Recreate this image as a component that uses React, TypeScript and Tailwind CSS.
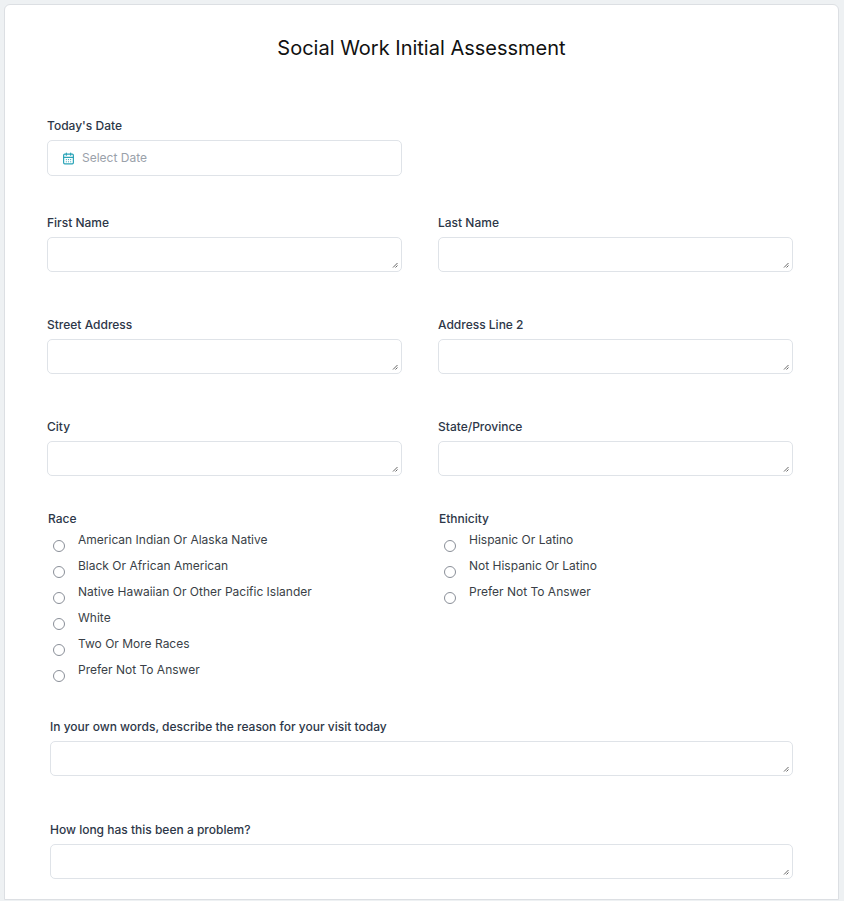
import { CalendarDays } from "lucide-react"

const race = [
  "American Indian Or Alaska Native",
  "Black Or African American",
  "Native Hawaiian Or Other Pacific Islander",
  "White",
  "Two Or More Races",
  "Prefer Not To Answer",
]
const ethnicity = ["Hispanic Or Latino", "Not Hispanic Or Latino", "Prefer Not To Answer"]

function Label({ children }: { children: string }) {
  return <div className="text-[12px] font-medium text-[#2d3748] h-[18px] leading-[18px] mb-[5px]">{children}</div>
}

function Box() {
  return (
    <div className="relative h-[35px] rounded-[5px] border border-[#dfe3e8] bg-white">
      <svg className="absolute right-[3px] bottom-[3px]" width="6" height="6" viewBox="0 0 6 6">
        <path d="M5.5 1 L1 5.5 M5.5 3.5 L3.5 5.5" stroke="#555" strokeWidth="0.9" />
      </svg>
    </div>
  )
}

function Field({ label }: { label: string }) {
  return (
    <div>
      <Label>{label}</Label>
      <Box />
    </div>
  )
}

function Radios({ label, items }: { label: string; items: string[] }) {
  return (
    <div className="pl-[1px]">
      <div className="text-[12px] font-medium text-[#2d3748] h-[18px] leading-[18px] mb-[3px]">{label}</div>
      <div className="flex flex-col">
        {items.map((t) => (
          <div key={t} className="flex items-start h-[26px] pl-[5px]">
            <span className="mt-[9px] w-[12px] h-[12px] rounded-full border border-[#8a8f98] shrink-0" />
            <span className="ml-[13px] text-[12px] text-[#3a3f47] leading-[18px]">{t}</span>
          </div>
        ))}
      </div>
    </div>
  )
}

export default function App() {
  return (
    <div className="min-h-[901px] bg-[#eef1f3] pt-[4px] px-[4px]" style={{ fontFamily: "Inter, 'Noto Sans', sans-serif" }}>
      <div className="bg-white border border-[#dcdfe3] rounded-t-[6px] w-[835px] pb-[20px]">
        <h1 className="text-center text-[20px] text-[#111] pt-[28px] h-[86px]">Social Work Initial Assessment</h1>
        <div className="pl-[42px] pr-[45px]">
          <div className="pt-[26px] w-[355px]">
            <Label>Today's Date</Label>
            <div className="h-[36px] rounded-[5px] border border-[#dfe3e8] flex items-center px-[14px] gap-[7px]">
              <CalendarDays className="w-[13px] h-[13px] text-[#2aa4b8]" strokeWidth={2.2} />
              <span className="text-[12px] text-[#9aa1aa]">Select Date</span>
            </div>
          </div>
          <div className="grid grid-cols-2 gap-x-[36px] mt-[38px] gap-y-[44px]">
            <Field label="First Name" />
            <Field label="Last Name" />
            <Field label="Street Address" />
            <Field label="Address Line 2" />
            <Field label="City" />
            <Field label="State/Province" />
          </div>
          <div className="grid grid-cols-2 gap-x-[36px] mt-[34px]">
            <Radios label="Race" items={race} />
            <Radios label="Ethnicity" items={ethnicity} />
          </div>
          <div className="pl-[3px] mt-[31px] flex flex-col gap-[45px]">
            <Field label="In your own words, describe the reason for your visit today" />
            <Field label="How long has this been a problem?" />
          </div>
        </div>
      </div>
    </div>
  )
}
